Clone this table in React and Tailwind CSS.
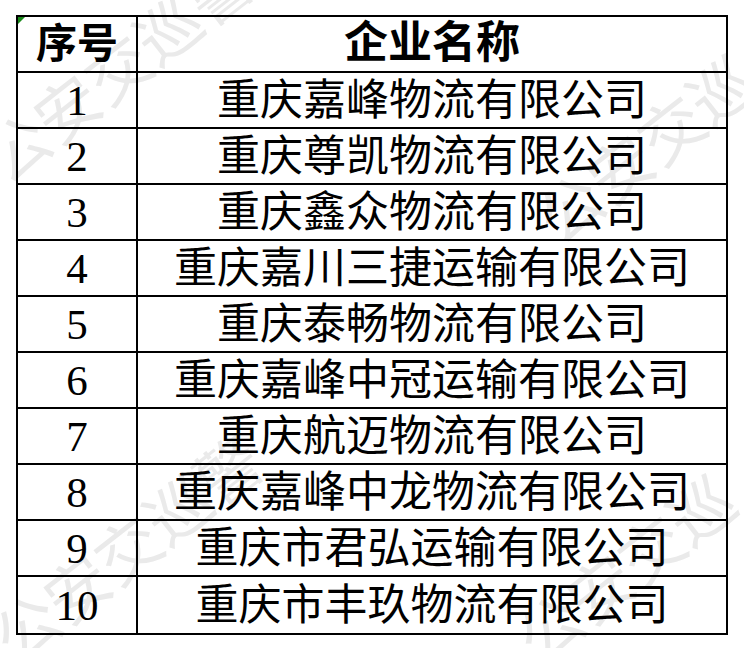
import React from "react";

const rows = [
  "重庆嘉峰物流有限公司",
  "重庆尊凯物流有限公司",
  "重庆鑫众物流有限公司",
  "重庆嘉川三捷运输有限公司",
  "重庆泰畅物流有限公司",
  "重庆嘉峰中冠运输有限公司",
  "重庆航迈物流有限公司",
  "重庆嘉峰中龙物流有限公司",
  "重庆市君弘运输有限公司",
  "重庆市丰玖物流有限公司",
];

const font = { fontFamily: '"Liberation Serif", "Noto Sans CJK SC", serif' };

const App = () => {
  return (
    <div className="relative w-[744px] h-[648px] bg-white overflow-hidden" style={font}>
      {/* watermark */}
      <div className="absolute inset-0 pointer-events-none select-none text-[#eaeaea] text-[64px] leading-none">
        <span className="absolute left-[-40px] top-[40px] -rotate-[38deg] whitespace-nowrap">公安交巡警</span>
        <span className="absolute left-[-30px] top-[520px] -rotate-[38deg] whitespace-nowrap">公安交巡警</span>
        <span className="absolute left-[520px] top-[120px] -rotate-[38deg] whitespace-nowrap">公安交巡</span>
        <span className="absolute left-[500px] top-[540px] -rotate-[38deg] whitespace-nowrap">公安交巡</span>
      </div>

      <div className="relative pt-[15px] pl-[16px]">
        <div className="relative w-[712px] border-2 border-black">
          <div className="absolute left-0 top-0 w-0 h-0 border-t-[7px] border-r-[7px] border-t-[#1a8a1a] border-r-transparent" />
          <div className="flex h-[56px] border-b-2 border-black font-semibold">
            <div className="w-[120px] border-r-2 border-black flex items-center justify-center text-[41px] leading-none">
              序号
            </div>
            <div className="flex-1 flex items-center justify-center text-[44px] leading-none">
              企业名称
            </div>
          </div>
          {rows.map((name, i) => (
            <div
              key={i}
              className={`flex h-[56px] ${i < rows.length - 1 ? "border-b-2 border-black" : ""}`}
            >
              <div className="w-[120px] border-r-2 border-black flex items-center justify-center text-[43px] leading-none">
                {i + 1}
              </div>
              <div className="flex-1 flex items-center justify-center text-[43px] leading-none">
                {name}
              </div>
            </div>
          ))}
        </div>
      </div>
    </div>
  );
};

export default App;
